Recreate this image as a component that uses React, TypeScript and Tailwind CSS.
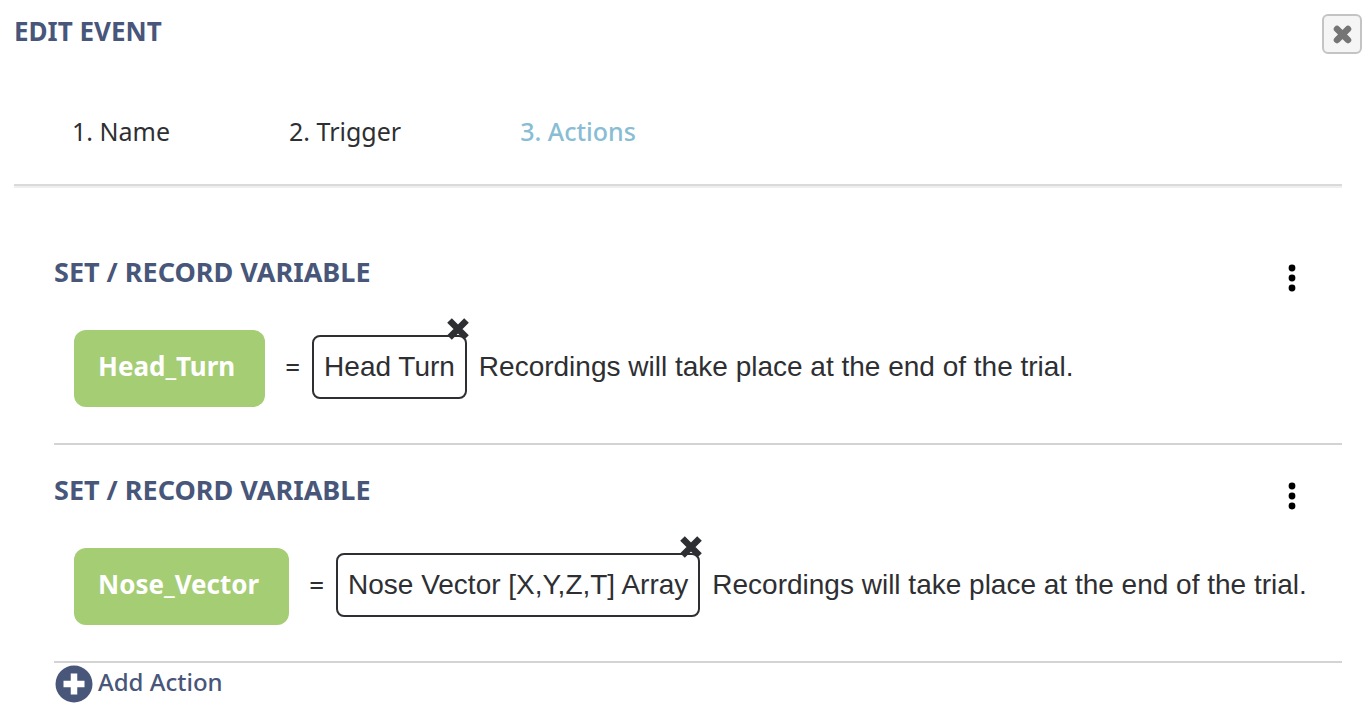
import React from 'react';

interface RecordAction {
  variable: string;
  source: string;
}

const steps = ['Name', 'Trigger', 'Actions'];
const currentStep = 2;

const actions: RecordAction[] = [
  { variable: 'Head_Turn', source: 'Head Turn' },
  { variable: 'Nose_Vector', source: 'Nose Vector [X,Y,Z,T] Array' },
];

const ActionCard: React.FC<{ action: RecordAction }> = ({ action }) => (
  <section className="border-b-2 border-[#d3d3d3] pt-[27px] pb-9">
    <div className="flex items-center justify-between h-9 pr-10 mb-10">
      <h2 className="text-[27px] leading-9 font-bold text-[#48567a]">SET / RECORD VARIABLE</h2>
      <button type="button" aria-label="Action menu" className="w-5 h-7 mt-3">
        <svg viewBox="0 0 20 28" className="w-5 h-7" fill="#000">
          <circle cx="10" cy="4" r="3.4" />
          <circle cx="10" cy="14" r="3.4" />
          <circle cx="10" cy="24" r="3.4" />
        </svg>
      </button>
    </div>

    <div className="flex items-baseline pl-5 text-[#2e2f33] whitespace-nowrap">
      <button type="button" className="rounded-xl bg-[#a5cd74] pt-[18px] pb-[23px] pl-6 pr-[30px] text-[26px] leading-9 font-bold text-white">
        {action.variable}
      </button>
      <span className="pl-5 pr-3 text-[26px] leading-9 font-medium">=</span>
      <div className="relative rounded-lg border-2 border-[#2e2f33] px-[10px] py-3 font-['Liberation_Sans',sans-serif] text-[28px] leading-9">
        {action.source}
        {/* Remove value */}
        <button type="button" aria-label={`Remove ${action.source}`} className="absolute -top-5 -right-[5px] w-6 h-6">
          <svg viewBox="0 0 24 24" className="w-6 h-6" stroke="#2e2f33" strokeWidth="6.5">
            <path d="M3.500 3.500l17 17M20.500 3.500l-17 17" />
          </svg>
        </button>
      </div>
      <p className="pl-3 font-['Liberation_Sans',sans-serif] text-[28px] leading-9">
        Recordings will take place at the end of the trial.
      </p>
    </div>
  </section>
);

export default function App() {
  return (
    <main className="bg-white pl-[14px] pb-4 font-['Noto_Sans',sans-serif]">
      <header className="flex items-start justify-between pt-[14px] pr-[10px]">
        <h1 className="text-[26px] leading-[34px] font-bold text-[#48567a]">EDIT EVENT</h1>
        <button
          type="button"
          aria-label="Close"
          className="flex items-center justify-center w-10 h-10 rounded-md border-2 border-[#c4c4c4] bg-[#f5f5f5]"
        >
          <svg viewBox="0 0 20 20" className="w-5 h-5" stroke="#757575" strokeWidth="6.5" strokeLinecap="round">
            <path d="M5 5l11 11M16 5L5 16" />
          </svg>
        </button>
      </header>

      <div className="pr-[30px]">
        <nav className="flex border-b-2 border-[#dadada] pl-[58px] pt-[59px] pb-[35px] text-[25px] leading-9 shadow-[0_2px_0_#efefef]">
          {steps.map((step, i) => (
            <a
              key={step}
              href="#"
              aria-current={i === currentStep ? 'step' : undefined}
              className={i === currentStep ? 'font-medium text-[#88bdd3]' : 'mr-[119px] text-[#2e2f33]'}
            >
              {i + 1}. {step}
            </a>
          ))}
        </nav>

        <div className="pl-10 pt-[41px]">
          {actions.map((action) => (
            <ActionCard key={action.variable} action={action} />
          ))}

          <button type="button" className="flex items-center gap-1 pt-px text-2xl leading-9 font-medium text-[#48567a]">
            <svg viewBox="0 0 40 40" className="w-10 h-10">
              <circle cx="20" cy="20" r="18.5" fill="#48567a" />
              <path d="M20 9.500v21M9.500 20h21" stroke="#fff" strokeWidth="6.500" />
            </svg>
            <span className="pb-1">Add Action</span>
          </button>
        </div>
      </div>
    </main>
  );
}
